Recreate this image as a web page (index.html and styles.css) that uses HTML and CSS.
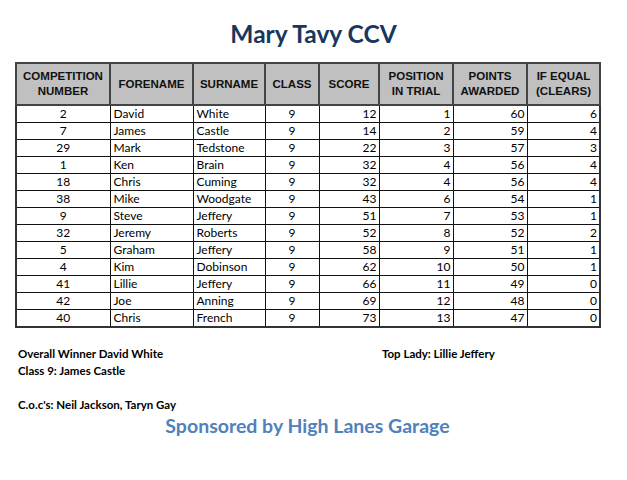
FILE: index.html
```html
<!DOCTYPE html>
<html>
<head>
<meta charset="utf-8">
<link rel="stylesheet" href="styles.css">
</head>
<body>
<div class="page">
  <h1 class="title">Mary Tavy CCV</h1>
  <table class="results">
    <colgroup>
      <col class="c1"><col class="c2"><col class="c3"><col class="c4"><col class="c5"><col class="c6"><col class="c7"><col class="c8">
    </colgroup>
    <thead>
      <tr>
        <th>COMPETITION<br>NUMBER</th>
        <th>FORENAME</th>
        <th>SURNAME</th>
        <th>CLASS</th>
        <th>SCORE</th>
        <th>POSITION<br>IN TRIAL</th>
        <th>POINTS<br>AWARDED</th>
        <th>IF EQUAL<br>(CLEARS)</th>
      </tr>
    </thead>
    <tbody>
      <tr><td class="ctr">2</td><td>David</td><td>White</td><td class="ctr">9</td><td class="num">12</td><td class="num">1</td><td class="num">60</td><td class="num">6</td></tr>
      <tr><td class="ctr">7</td><td>James</td><td>Castle</td><td class="ctr">9</td><td class="num">14</td><td class="num">2</td><td class="num">59</td><td class="num">4</td></tr>
      <tr><td class="ctr">29</td><td>Mark</td><td>Tedstone</td><td class="ctr">9</td><td class="num">22</td><td class="num">3</td><td class="num">57</td><td class="num">3</td></tr>
      <tr><td class="ctr">1</td><td>Ken</td><td>Brain</td><td class="ctr">9</td><td class="num">32</td><td class="num">4</td><td class="num">56</td><td class="num">4</td></tr>
      <tr><td class="ctr">18</td><td>Chris</td><td>Cuming</td><td class="ctr">9</td><td class="num">32</td><td class="num">4</td><td class="num">56</td><td class="num">4</td></tr>
      <tr><td class="ctr">38</td><td>Mike</td><td>Woodgate</td><td class="ctr">9</td><td class="num">43</td><td class="num">6</td><td class="num">54</td><td class="num">1</td></tr>
      <tr><td class="ctr">9</td><td>Steve</td><td>Jeffery</td><td class="ctr">9</td><td class="num">51</td><td class="num">7</td><td class="num">53</td><td class="num">1</td></tr>
      <tr><td class="ctr">32</td><td>Jeremy</td><td>Roberts</td><td class="ctr">9</td><td class="num">52</td><td class="num">8</td><td class="num">52</td><td class="num">2</td></tr>
      <tr><td class="ctr">5</td><td>Graham</td><td>Jeffery</td><td class="ctr">9</td><td class="num">58</td><td class="num">9</td><td class="num">51</td><td class="num">1</td></tr>
      <tr><td class="ctr">4</td><td>Kim</td><td>Dobinson</td><td class="ctr">9</td><td class="num">62</td><td class="num">10</td><td class="num">50</td><td class="num">1</td></tr>
      <tr><td class="ctr">41</td><td>Lillie</td><td>Jeffery</td><td class="ctr">9</td><td class="num">66</td><td class="num">11</td><td class="num">49</td><td class="num">0</td></tr>
      <tr><td class="ctr">42</td><td>Joe</td><td>Anning</td><td class="ctr">9</td><td class="num">69</td><td class="num">12</td><td class="num">48</td><td class="num">0</td></tr>
      <tr><td class="ctr">40</td><td>Chris</td><td>French</td><td class="ctr">9</td><td class="num">73</td><td class="num">13</td><td class="num">47</td><td class="num">0</td></tr>
    </tbody>
  </table>
  <div class="notes">
    <div class="notes-row">
      <div class="notes-left">
        <p>Overall Winner David White</p>
        <p>Class 9: James Castle</p>
      </div>
      <div class="notes-right">
        <p>Top Lady: Lillie Jeffery</p>
      </div>
    </div>
    <p class="coc">C.o.c's: Neil Jackson, Taryn Gay</p>
  </div>
  <p class="sponsor">Sponsored by High Lanes Garage</p>
</div>
</body>
</html>
```

FILE: styles.css
```css
html, body {
  margin: 0;
  padding: 0;
  background: #ffffff;
}
.page {
  width: 627px;
  height: 480px;
  font-family: Lato, "Open Sans", sans-serif;
  color: #000;
}
.title {
  margin: 0;
  padding-top: 19px;
  height: 62px;
  box-sizing: border-box;
  text-align: center;
  font-family: Lato, sans-serif;
  font-weight: 700;
  font-size: 24.5px;
  line-height: 30px;
  color: #17375e;
}
.results {
  margin-left: 15px;
  width: 585px;
  border-collapse: collapse;
  table-layout: fixed;
  border: 2px solid #333;
}
.c1 { width: 94px; }
.c2 { width: 83px; }
.c3 { width: 72px; }
.c4 { width: 54px; }
.c5 { width: 60px; }
.c6 { width: 74px; }
.c7 { width: 74px; }
.c8 { width: 73px; }
.results th {
  background: #c0c0c0;
  border: 2px solid #444;
  height: 40px;
  padding: 0;
  font-family: "Liberation Sans", Arial, sans-serif;
  font-weight: 700;
  font-size: 11.5px;
  line-height: 15px;
  text-align: center;
  vertical-align: middle;
  color: #111;
}
.results td {
  border: 1px solid #111;
  height: 16px;
  padding: 0 3px 0 3px;
  font-size: 12px;
  line-height: 16px;
  white-space: nowrap;
  overflow: hidden;
}
.results td.ctr { text-align: center; }
.results td.num { text-align: right; padding-right: 2px; }
.notes {
  margin: 17px 0 0 18px;
  font-size: 11.5px;
  font-weight: 700;
  line-height: 17px;
}
.notes p { margin: 0; }
.notes-row {
  display: flex;
}
.notes-left {
  width: 364px;
}
.coc {
  margin-top: 17px !important;
}
.sponsor {
  margin: 1px 0 0 0;
  padding-right: 12px;
  text-align: center;
  font-size: 19.5px;
  font-weight: 700;
  line-height: 24px;
  color: #4f81bd;
}
```
